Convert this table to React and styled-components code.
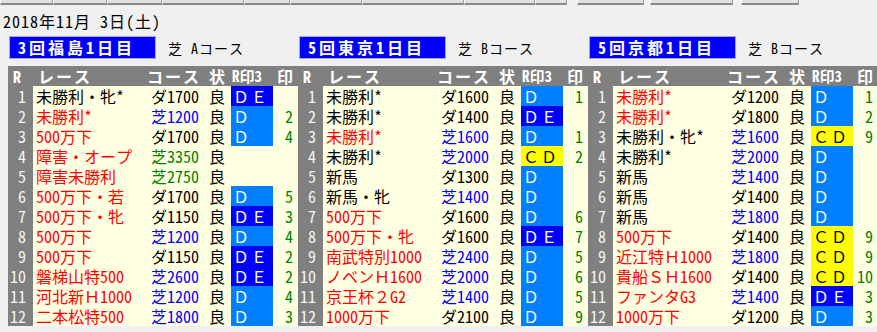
import React from 'react';
import styled, { createGlobalStyle } from 'styled-components';

const GlobalStyle = createGlobalStyle`
  html, body {
    margin: 0;
    padding: 0;
    background: #f0f0f0;
  }
  body {
    font-family: "Noto Sans Mono CJK JP", "Noto Sans CJK JP", sans-serif;
    overflow: hidden;
  }
`;

const Page = styled.div`
  width: 877px;
  height: 332px;
  background: #f0f0f0;
  overflow: hidden;
`;

const Toolbar = styled.div`
  display: flex;
  height: 5px;
  overflow: hidden;
`;

const ToolButton = styled.div`
  box-sizing: border-box;
  width: ${(p) => p.w}px;
  margin-left: ${(p) => p.gap || 0}px;
  height: 5px;
  background: #e1e1e1;
  border-left: 1px solid #fff;
  border-right: 1px solid #a0a0a0;
  border-bottom: 2px solid #8a8a8a;
`;

const DateLine = styled.div`
  margin-top: 6px;
  padding-left: 3px;
  height: 20px;
  line-height: 20px;
  font-size: 16px;
  letter-spacing: 1px;
  color: #000;
`;

const Sections = styled.div`
  display: flex;
  padding-left: 8px;
  margin-top: 5px;
`;

const Section = styled.div`
  width: 290px;
  flex: none;
`;

const VenueRow = styled.div`
  display: flex;
  align-items: center;
  height: 23px;
  margin-bottom: 7px;
`;

const VenueBox = styled.div`
  box-sizing: border-box;
  margin-left: 1px;
  width: 147px;
  height: 23px;
  background: #0000ff;
  border: 1px solid #a8a8d8;
  color: #fff;
  font-weight: bold;
  font-size: 16px;
  letter-spacing: 3px;
  line-height: 21px;
  padding-left: 8px;
  white-space: nowrap;
`;

const CourseNote = styled.div`
  margin-left: 12px;
  font-size: 14px;
  letter-spacing: 1px;
  color: #000;
  white-space: nowrap;
`;

const Row = styled.div`
  display: grid;
  grid-template-columns: 25px 110px 60px 28px 42px 25px;
  height: 20px;
  line-height: 20px;
  font-size: 16px;
  white-space: nowrap;
  background: ${(p) => (p.head ? '#808080' : '#ffffe1')};
  color: ${(p) => (p.head ? '#fff' : '#000')};
  font-weight: ${(p) => (p.head ? 'bold' : 'normal')};
`;

const HeadCell = styled.div`
  text-align: ${(p) => p.align || 'left'};
  padding-left: ${(p) => p.pl || 0}px;
  padding-right: ${(p) => p.pr || 0}px;
  letter-spacing: ${(p) => p.ls || 0}px;
  font-size: ${(p) => p.fs || 16}px;
`;

const NumCell = styled.div`
  background: #808080;
  color: #f4f4f4;
  text-align: right;
  padding-right: 7px;
`;

const NameCell = styled.div`
  padding-left: 3px;
  color: ${(p) => (p.red ? '#ff0000' : '#000')};
`;

const CourseCell = styled.div`
  text-align: right;
  padding-right: 4px;
  color: ${(p) => (p.kind === 'g' ? '#008000' : p.kind === 't' ? '#0000ff' : '#000')};
`;

const StateCell = styled.div`
  text-align: center;
`;

const markColors = {
  DE: ['#0000ff', '#fff'],
  D: ['#0080ff', '#fff'],
  CD: ['#ffff00', '#000'],
};

const MarkCell = styled.div`
  background: ${(p) => (p.kind ? markColors[p.kind][0] : 'transparent')};
  color: ${(p) => (p.kind ? markColors[p.kind][1] : '#000')};
  padding-left: 2px;
  letter-spacing: 2px;
`;

const PickCell = styled.div`
  text-align: right;
  padding-right: 5px;
  color: #008000;
`;

const markText = { DE: 'ＤＥ', D: 'Ｄ', CD: 'ＣＤ' };

// [name, red, course, courseKind, mark, pick]
const venues = [
  {
    title: '3回福島1日目',
    note: '芝 Aコース',
    races: [
      ['未勝利・牝*', false, 'ダ1700', 'd', 'DE', ''],
      ['未勝利*', true, '芝1200', 't', 'D', '2'],
      ['500万下', true, 'ダ1700', 'd', 'D', '4'],
      ['障害・オープ', true, '芝3350', 'g', '', ''],
      ['障害未勝利', true, '芝2750', 'g', '', ''],
      ['500万下・若', true, 'ダ1700', 'd', 'D', '5'],
      ['500万下・牝', true, 'ダ1150', 'd', 'DE', '3'],
      ['500万下', true, '芝1200', 't', 'D', '4'],
      ['500万下', true, 'ダ1150', 'd', 'DE', '2'],
      ['磐梯山特500', true, '芝2600', 't', 'DE', '2'],
      ['河北新Ｈ1000', true, '芝1200', 't', 'D', '4'],
      ['二本松特500', true, '芝1800', 't', 'D', '3'],
    ],
  },
  {
    title: '5回東京1日目',
    note: '芝 Bコース',
    races: [
      ['未勝利*', false, 'ダ1600', 'd', 'D', '1'],
      ['未勝利*', false, 'ダ1400', 'd', 'DE', ''],
      ['未勝利*', true, '芝1600', 't', 'D', '1'],
      ['未勝利*', false, '芝2000', 't', 'CD', '2'],
      ['新馬', false, 'ダ1300', 'd', 'D', ''],
      ['新馬・牝', false, '芝1400', 't', 'D', ''],
      ['500万下', true, 'ダ1600', 'd', 'D', '6'],
      ['500万下・牝', true, 'ダ1600', 'd', 'DE', '7'],
      ['南武特別1000', true, '芝2400', 't', 'D', '5'],
      ['ノベンＨ1600', true, '芝2000', 't', 'D', '6'],
      ['京王杯２G2', true, '芝1400', 't', 'D', '5'],
      ['1000万下', true, 'ダ2100', 'd', 'D', '9'],
    ],
  },
  {
    title: '5回京都1日目',
    note: '芝 Bコース',
    races: [
      ['未勝利*', true, 'ダ1200', 'd', 'D', '1'],
      ['未勝利*', true, 'ダ1800', 'd', 'D', '2'],
      ['未勝利・牝*', false, '芝1600', 't', 'CD', '9'],
      ['未勝利*', false, '芝2000', 't', 'D', ''],
      ['新馬', false, '芝1400', 't', 'D', ''],
      ['新馬', false, 'ダ1400', 'd', 'D', ''],
      ['新馬', false, '芝1800', 't', 'D', ''],
      ['500万下', true, 'ダ1400', 'd', 'CD', '9'],
      ['近江特Ｈ1000', true, '芝1800', 't', 'CD', '9'],
      ['貴船ＳＨ1600', true, 'ダ1400', 'd', 'CD', '10'],
      ['ファンタG3', true, '芝1400', 't', 'DE', '3'],
      ['1000万下', true, 'ダ1200', 'd', 'D', '3'],
    ],
  },
];

const toolButtons = [
  [53], [54], [55], [82], [46], [72], [102], [71], [32],
  [67, 10], [83, 6], [58, 8],
];

const VenueTable = ({ venue }) => (
  <Section>
    <VenueRow>
      <VenueBox>{venue.title}</VenueBox>
      <CourseNote>{venue.note}</CourseNote>
    </VenueRow>
    <Row head>
      <HeadCell pl={5}>R</HeadCell>
      <HeadCell pl={5} ls={2}>レース</HeadCell>
      <HeadCell align="right" pr={2} ls={2}>コース</HeadCell>
      <HeadCell align="center">状</HeadCell>
      <HeadCell pl={1} fs={15}>R印3</HeadCell>
      <HeadCell pl={4}>印</HeadCell>
    </Row>
    {venue.races.map(([name, red, course, kind, mark, pick], i) => (
      <Row key={i}>
        <NumCell>{i + 1}</NumCell>
        <NameCell red={red}>{name}</NameCell>
        <CourseCell kind={kind}>{course}</CourseCell>
        <StateCell>良</StateCell>
        <MarkCell kind={mark || undefined}>{mark ? markText[mark] : ''}</MarkCell>
        <PickCell>{pick}</PickCell>
      </Row>
    ))}
  </Section>
);

const App = () => (
  <Page>
    <GlobalStyle />
    <Toolbar>
      {toolButtons.map(([w, gap], i) => (
        <ToolButton key={i} w={w} gap={gap} />
      ))}
    </Toolbar>
    <DateLine>2018年11月 3日(土)</DateLine>
    <Sections>
      {venues.map((v) => (
        <VenueTable key={v.title} venue={v} />
      ))}
    </Sections>
  </Page>
);

export default App;
